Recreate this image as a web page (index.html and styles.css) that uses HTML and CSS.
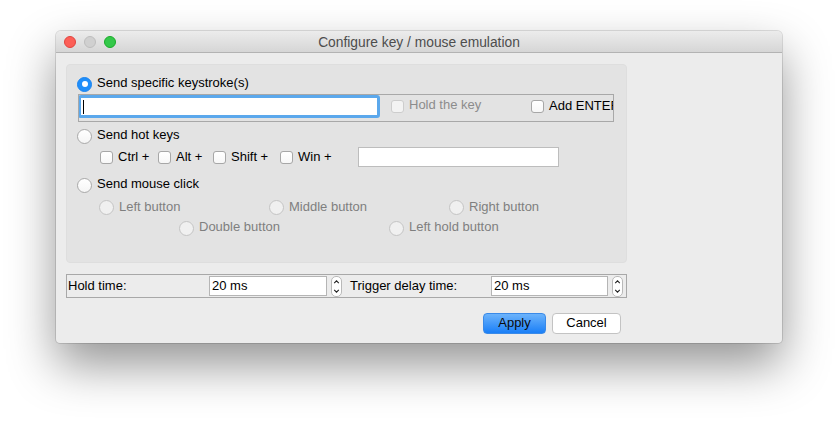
FILE: index.html
```html
<!DOCTYPE html>
<html>
<head>
<meta charset="utf-8">
<link rel="stylesheet" href="styles.css">
</head>
<body>
<div class="window">
  <div class="titlebar">
    <div class="lights">
      <span class="light red"></span>
      <span class="light grey"></span>
      <span class="light green"></span>
    </div>
    <div class="title">Configure key / mouse emulation</div>
    <div></div>
  </div>
  <div class="content">
    <div class="group">
      <div class="row main-row first">
        <span class="radio on"></span><span class="label">Send specific keystroke(s)</span>
      </div>
      <div class="keyframe">
        <div class="keyinput"><span class="caret"></span></div>
        <div class="chk hold disabled"><span class="box"></span><span class="txt">Hold the key</span></div>
        <div class="chk enter"><span class="box"></span><span class="txt">Add ENTER</span></div>
      </div>
      <div class="row main-row hot">
        <span class="radio"></span><span class="label">Send hot keys</span>
      </div>
      <div class="row hotkeys">
        <div class="chk w-ctrl"><span class="box"></span><span class="txt">Ctrl +</span></div>
        <div class="chk w-alt"><span class="box"></span><span class="txt">Alt +</span></div>
        <div class="chk w-shift"><span class="box"></span><span class="txt">Shift +</span></div>
        <div class="chk w-win"><span class="box"></span><span class="txt">Win +</span></div>
        <div class="hotinput"></div>
      </div>
      <div class="row main-row mouse">
        <span class="radio"></span><span class="label">Send mouse click</span>
      </div>
      <div class="row sub sub1">
        <div class="opt w-left"><span class="radio dis"></span><span class="txt">Left button</span></div>
        <div class="opt w-middle"><span class="radio dis"></span><span class="txt">Middle button</span></div>
        <div class="opt"><span class="radio dis"></span><span class="txt">Right button</span></div>
      </div>
      <div class="row sub sub2">
        <div class="opt w-double"><span class="radio dis"></span><span class="txt">Double button</span></div>
        <div class="opt"><span class="radio dis"></span><span class="txt">Left hold button</span></div>
      </div>
    </div>
    <div class="timeframe">
      <span class="tlabel">Hold time:</span>
      <div class="tinput">20 ms</div>
      <div class="spin">
        <svg width="9" height="19" viewBox="0 0 9 19"><path d="M2.2 6.2 L4.5 3.9 L6.8 6.2" fill="none" stroke="#222" stroke-width="1.1"/><path d="M2.2 12.8 L4.5 15.1 L6.8 12.8" fill="none" stroke="#222" stroke-width="1.1"/></svg>
      </div>
      <span class="tlabel second">Trigger delay time:</span>
      <div class="tinput narrow">20 ms</div>
      <div class="spin">
        <svg width="9" height="19" viewBox="0 0 9 19"><path d="M2.2 6.2 L4.5 3.9 L6.8 6.2" fill="none" stroke="#222" stroke-width="1.1"/><path d="M2.2 12.8 L4.5 15.1 L6.8 12.8" fill="none" stroke="#222" stroke-width="1.1"/></svg>
      </div>
    </div>
    <div class="buttons">
      <div class="btn primary">Apply</div>
      <div class="btn">Cancel</div>
    </div>
  </div>
</div>
</body>
</html>
```

FILE: styles.css
```css
* { box-sizing: border-box; }
html, body { margin: 0; padding: 0; background: #ffffff; }
body {
  font-family: "Liberation Sans", Arial, sans-serif;
  font-size: 13px;
  color: #000;
  width: 838px;
  height: 424px;
  overflow: hidden;
}
.window {
  width: 726px;
  height: 312px;
  margin: 31px 0 0 56px;
  background: #ececec;
  border-radius: 5px 5px 4px 4px;
  box-shadow: 0 22px 48px rgba(0,0,0,0.42), 0 0 0 1px rgba(0,0,0,0.12);
  overflow: hidden;
}
.titlebar {
  height: 22px;
  display: grid;
  grid-template-columns: 1fr auto 1fr;
  align-items: center;
  background: linear-gradient(#ececec, #d6d6d6);
  border-bottom: 1px solid #b3b3b3;
}
.lights { display: flex; gap: 8px; padding-left: 8px; padding-top: 1px; }
.light { width: 12px; height: 12px; border-radius: 50%; }
.red { background: #fc5f57; border: 1px solid #e0443e; }
.grey { background: #d0d0d0; border: 1px solid #bdbdbd; }
.green { background: #34c84a; border: 1px solid #1aab29; }
.title { color: #4d4d4d; font-size: 13.8px; padding-top: 1px; }

.content { padding: 11px 0 0 10px; }
.group {
  width: 561px;
  height: 199px;
  background: #e3e3e3;
  border-radius: 4px;
  border: 1px solid #dedede;
  padding-left: 10px;
}
.row { display: flex; align-items: center; }
.main-row { height: 16px; }
.main-row .label { margin-left: 5px; padding-bottom: 4px; }
.txt { padding-bottom: 2px; }
.first { margin-top: 11px; }
.hot { margin-top: 6px; }
.mouse { margin-top: 10px; }

.radio {
  width: 15px; height: 15px; border-radius: 50%;
  background: linear-gradient(#ffffff, #f5f5f5);
  border: 1px solid #a9a9a9;
  flex: none;
  position: relative;
}
.radio.on {
  background: #1f8efa;
  border: 1px solid #1a84f0;
}
.radio.on::after {
  content: "";
  position: absolute;
  left: 3.5px; top: 3.5px;
  width: 6px; height: 6px; border-radius: 50%;
  background: #fff;
}
.radio.dis { background: #f0f0f0; border-color: #c4c4c4; }

.keyframe {
  margin: 2px 0 0 1px;
  width: 536px;
  height: 28px;
  border: 1px solid #a8a8a8;
  display: flex;
  align-items: flex-start;
  overflow: hidden;
}
.keyinput {
  width: 302px;
  height: 23px;
  margin-left: -1px;
  background: #fff;
  border: 3px solid #5ba8ec;
  border-radius: 3px;
  padding: 2px 0 0 2px;
  flex: none;
}
.caret { display: block; width: 1px; height: 14px; background: #000; }
.chk { display: flex; align-items: center; flex: none; }
.box {
  width: 13px; height: 13px;
  border: 1px solid #a7a7a7;
  border-radius: 3px;
  background: linear-gradient(#ffffff, #f7f7f7);
  margin-right: 5px;
  flex: none;
}
.hold, .enter { height: 13px; margin-top: 5px; }
.hold { margin-left: 11px; width: 140px; color: #8c8c8c; }
.hold .txt { padding-bottom: 5px; }
.enter .txt { padding-bottom: 2px; }
.hold .box { background: #f3f3f3; border-color: #cdcdcd; }
.enter { white-space: nowrap; }

.hotkeys { margin-top: 3px; height: 20px; padding-left: 23px; }
.w-ctrl { width: 58px; }
.w-alt { width: 55px; }
.w-shift { width: 67px; }
.w-win { width: 78px; }
.hotinput {
  width: 201px; height: 20px;
  background: #fff;
  border: 1px solid #bdbdbd;
}

.sub { height: 16px; color: #7f7f7f; padding-left: 22px; }
.sub1 { margin-top: 6px; }
.sub2 { margin-top: 5px; padding-left: 102px; }
.sub2 .txt { padding-bottom: 3px; }
.opt { display: flex; align-items: center; flex: none; }
.opt .radio { margin-right: 5px; }
.w-left { width: 170px; }
.w-middle { width: 180px; }
.w-double { width: 210px; }

.timeframe {
  margin-top: 11px;
  width: 561px;
  height: 24px;
  border: 1px solid #a8a8a8;
  display: flex;
  align-items: center;
  padding-left: 1px;
}
.tlabel { width: 141px; flex: none; padding-bottom: 2px; }
.tlabel.second { margin-left: 8px; }
.tinput {
  width: 118px;
  height: 20px;
  background: #fff;
  border: 1px solid #b5b5b5;
  padding: 1px 0 0 2px;
  flex: none;
}
.tinput.narrow { width: 117px; }
.spin {
  width: 11px; height: 21px;
  margin-left: 4px;
  background: #fff;
  border: 1px solid #b9b9b9;
  border-radius: 5px;
  display: flex; align-items: center; justify-content: center;
  flex: none;
}

.buttons {
  display: flex;
  justify-content: flex-end;
  gap: 6px;
  width: 561px;
  padding-right: 6px;
  margin-top: 15px;
}
.btn {
  height: 21px;
  border-radius: 4px;
  border: 1px solid #c3c3c3;
  background: #fff;
  text-align: center;
  line-height: 18px;
  width: 69px;
}
.btn.primary {
  width: 63px;
  background: linear-gradient(#6cb3fb, #1a7ff7);
  border-color: #3a8ae8;
  color: #0b0b0b;
}
```
